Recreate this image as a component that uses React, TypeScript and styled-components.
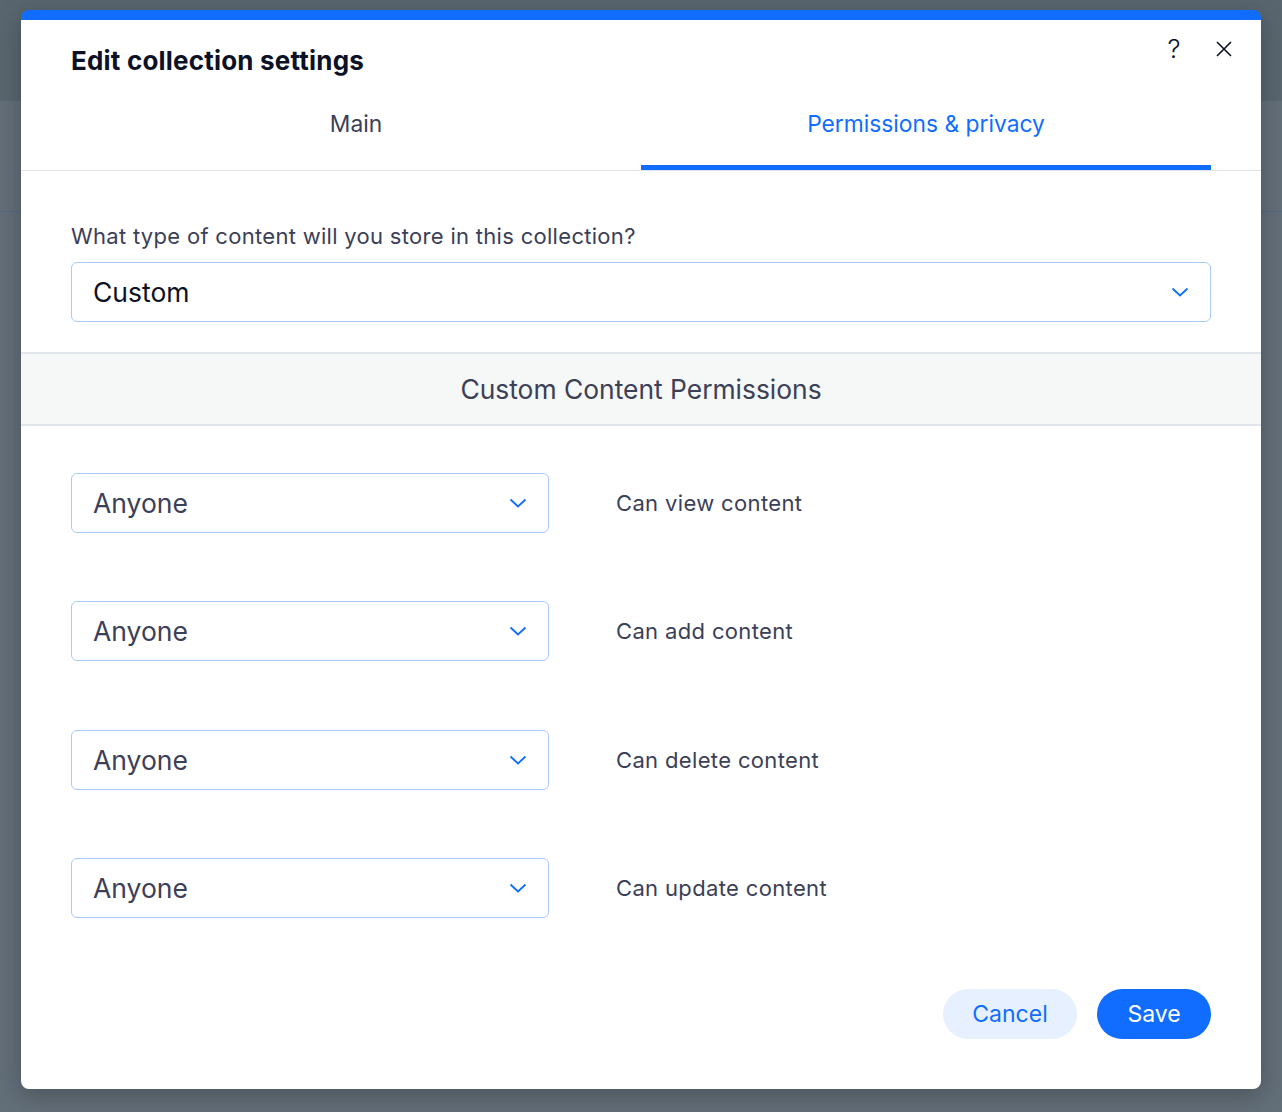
import React from "react";
import styled, { createGlobalStyle } from "styled-components";

const Global = createGlobalStyle`
  html, body { margin: 0; padding: 0; }
  body { font-family: "Inter", "Noto Sans", sans-serif; background: #626e78; }
  * { box-sizing: border-box; }
`;

const Page = styled.div`
  position: relative;
  width: 1282px;
  height: 1112px;
  overflow: hidden;
  background: #626e78;
`;

const PageHeader = styled.div`
  height: 101px;
  background: #59666f;
`;

const PageRule = styled.div`
  margin-top: 110px;
  height: 1px;
  background: #4f6a88;
`;

const Modal = styled.div`
  position: absolute;
  left: 21px;
  top: 10px;
  width: 1240px;
  height: 1079px;
  background: #ffffff;
  border-radius: 8px;
  border-top: 10px solid #116dff;
  box-shadow: 0 6px 24px rgba(0, 0, 0, 0.25);
  display: flex;
  flex-direction: column;
`;

const Header = styled.div`
  position: relative;
  padding: 24px 50px 0;
  height: 74px;
`;

const Title = styled.h1`
  margin: 0;
  font-size: 26px;
  line-height: 34px;
  font-weight: 700;
  color: #0c1126;
  letter-spacing: 0.2px;
`;

const HeaderActions = styled.div`
  position: absolute;
  top: 16px;
  right: 24px;
  display: flex;
  align-items: center;
  gap: 24px;
`;

const IconButton = styled.button`
  border: 0;
  background: none;
  padding: 0;
  width: 26px;
  height: 26px;
  display: flex;
  align-items: center;
  justify-content: center;
  color: #162d3d;
  cursor: pointer;
`;

const HelpGlyph = styled.span`
  font-family: "Inter", sans-serif;
  font-size: 26px;
  font-weight: 300;
  color: #0c1126;
  line-height: 1;
`;

const Tabs = styled.div`
  display: flex;
  padding: 0 50px;
  border-bottom: 1px solid #dfe5eb;
`;

const Tab = styled.div<{ $active?: boolean }>`
  flex: 1;
  height: 76px;
  padding-top: 15px;
  text-align: center;
  font-size: 22.8px;
  line-height: 30px;
  color: ${(p) => (p.$active ? "#116dff" : "#3b4057")};
  border-bottom: 5px solid ${(p) => (p.$active ? "#116dff" : "transparent")};
`;

const TypeSection = styled.div`
  padding: 52px 50px 30px;
  display: flex;
  flex-direction: column;
  gap: 13px;
`;

const FieldLabel = styled.div`
  font-size: 22px;
  line-height: 26px;
  color: #3b4057;
  letter-spacing: 0.3px;
`;

const Select = styled.div<{ $wide?: boolean }>`
  height: 60px;
  width: ${(p) => (p.$wide ? "100%" : "478px")};
  border: 1px solid #a8caff;
  border-radius: 6px;
  display: flex;
  align-items: center;
  justify-content: space-between;
  padding: 0 21px 0 21px;
  font-size: 26.5px;
  color: ${(p) => (p.$wide ? "#0c1126" : "#3b4057")};
  background: #fff;
`;

const SectionTitle = styled.div`
  height: 74px;
  background: #f6f7f7;
  border-top: 2px solid #dfe5eb;
  border-bottom: 2px solid #dfe5eb;
  display: flex;
  align-items: center;
  justify-content: center;
  font-size: 26.4px;
  color: #3b4057;
`;

const Rows = styled.div`
  padding: 47px 50px 0;
  display: flex;
  flex-direction: column;
  gap: 68.4px;
`;

const Row = styled.div`
  display: flex;
  align-items: center;
  gap: 67px;
`;

const RowLabel = styled.div`
  font-size: 22px;
  color: #3b4057;
  letter-spacing: 0.35px;
`;

const Footer = styled.div`
  margin-top: auto;
  padding: 0 50px 50px;
  display: flex;
  justify-content: flex-end;
  gap: 20px;
`;

const Button = styled.button<{ $primary?: boolean }>`
  height: 50px;
  padding: 0;
  border: 0;
  border-radius: 25px;
  font-family: inherit;
  font-size: 23px;
  background: ${(p) => (p.$primary ? "#116dff" : "#e7f0ff")};
  color: ${(p) => (p.$primary ? "#ffffff" : "#116dff")};
  width: ${(p) => (p.$primary ? "114px" : "134px")};
`;

const Chevron = () => (
  <svg width="18" height="10" viewBox="0 0 18 10" fill="none">
    <path d="M1.5 1.5 L9 8.5 L16.5 1.5" stroke="#116dff" strokeWidth="1.8" />
  </svg>
);

const CloseIcon = () => (
  <svg width="18" height="18" viewBox="0 0 18 18" fill="none">
    <path d="M2 2 L16 16 M16 2 L2 16" stroke="#0c1126" strokeWidth="1.6" />
  </svg>
);

const permissions = [
  "Can view content",
  "Can add content",
  "Can delete content",
  "Can update content",
];

export default function App() {
  return (
    <>
      <Global />
      <Page>
        <PageHeader />
        <PageRule />
        <Modal>
          <Header>
            <Title>Edit collection settings</Title>
            <HeaderActions>
              <IconButton aria-label="Help">
                <HelpGlyph>?</HelpGlyph>
              </IconButton>
              <IconButton aria-label="Close">
                <CloseIcon />
              </IconButton>
            </HeaderActions>
          </Header>
          <Tabs>
            <Tab>Main</Tab>
            <Tab $active>Permissions &amp; privacy</Tab>
          </Tabs>
          <TypeSection>
            <FieldLabel>What type of content will you store in this collection?</FieldLabel>
            <Select $wide>
              <span>Custom</span>
              <Chevron />
            </Select>
          </TypeSection>
          <SectionTitle>Custom Content Permissions</SectionTitle>
          <Rows>
            {permissions.map((p) => (
              <Row key={p}>
                <Select>
                  <span>Anyone</span>
                  <Chevron />
                </Select>
                <RowLabel>{p}</RowLabel>
              </Row>
            ))}
          </Rows>
          <Footer>
            <Button>Cancel</Button>
            <Button $primary>Save</Button>
          </Footer>
        </Modal>
      </Page>
    </>
  );
}
